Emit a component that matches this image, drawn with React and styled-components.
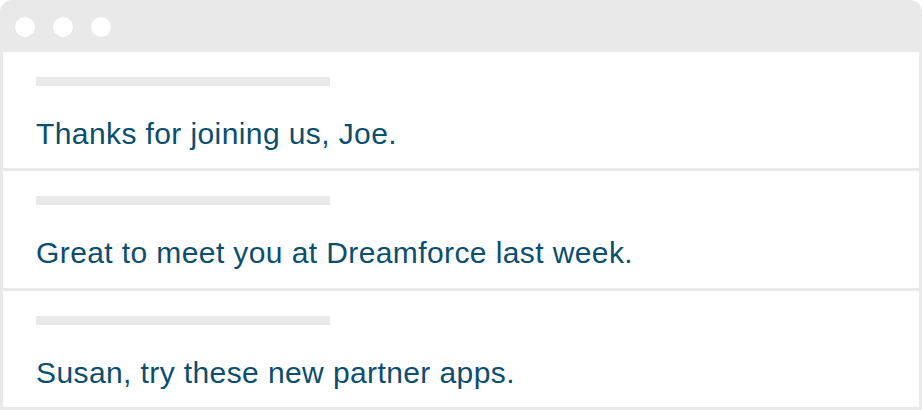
import React from "react";
import styled, { createGlobalStyle } from "styled-components";

const GlobalStyle = createGlobalStyle`
    html, body {
        margin: 0;
        padding: 0;
        background-color: #ffffff;
    }
`;

const messages = [
    "Thanks for joining us, Joe.",
    "Great to meet you at Dreamforce last week.",
    "Susan, try these new partner apps.",
];

export default function App() {
    return (
        <>
            <GlobalStyle />
            <Window>
                <TitleBar>
                    <Dot />
                    <Dot />
                    <Dot />
                </TitleBar>
                <Content>
                    {messages.map((text) => (
                        <Row key={text}>
                            <Placeholder />
                            <Message>{text}</Message>
                        </Row>
                    ))}
                </Content>
            </Window>
        </>
    );
}

const Window = styled.div`
    width: 922px;
    height: 410px;
    box-sizing: border-box;
    background-color: #e8e9e8;
    border-radius: 12px 12px 0 0;
    padding: 0 3px 3px;
    display: flex;
    flex-direction: column;
`;

const TitleBar = styled.div`
    height: 52px;
    flex-shrink: 0;
    display: flex;
    align-items: center;
    gap: 18px;
    padding: 1px 0 0 12px;
    box-sizing: border-box;
`;

const Dot = styled.span`
    width: 20px;
    height: 20px;
    border-radius: 50%;
    background-color: #ffffff;
`;

const Content = styled.div`
    flex: 1;
    display: flex;
    flex-direction: column;
    gap: 3px;
`;

const Row = styled.div`
    flex: 1;
    background-color: #ffffff;
    padding: 25px 0 0 33px;
    box-sizing: border-box;
`;

const Placeholder = styled.div`
    width: 294px;
    height: 9px;
    background-color: #e8e9e8;
`;

const Message = styled.div`
    margin-top: 30px;
    font-family: "Liberation Sans", Arial, sans-serif;
    font-size: 30px;
    line-height: 36px;
    letter-spacing: 0.4px;
    color: #0b4e6e;
`;
